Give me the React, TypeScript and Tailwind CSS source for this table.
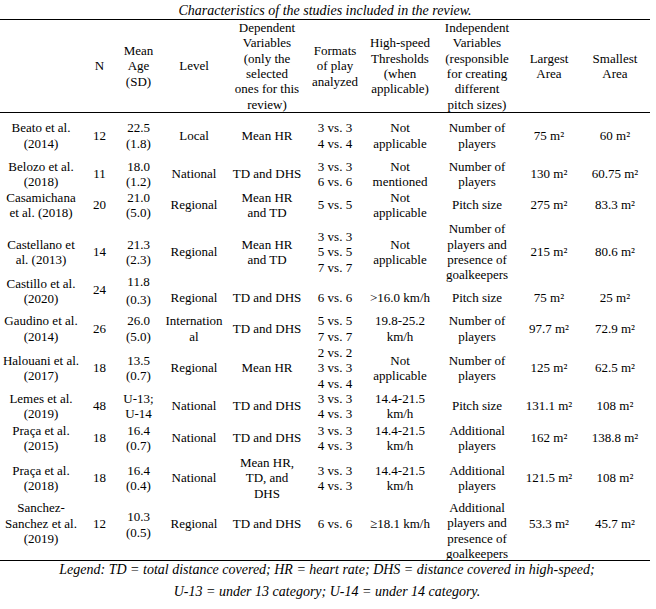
import React from "react";

type Cell = { lines: React.ReactNode[]; cls?: string };
type Row = { h: number; cells: Cell[] };

const M2 = (v: string) => `${v} m²`;

const L = (...lines: React.ReactNode[]): Cell => ({ lines });
const LC = (cls: string, ...lines: React.ReactNode[]): Cell => ({ lines, cls });

const header: Cell[] = [
  L(""),
  L("N"),
  L("Mean", "Age", "(SD)"),
  L("Level"),
  L("Dependent", "Variables", "(only the", "selected", "ones for this", "review)"),
  L("Formats", "of play", "analyzed"),
  L("High-speed", "Thresholds", "(when", "applicable)"),
  L("Independent", "Variables", "(responsible", "for creating", "different", "pitch sizes)"),
  L("Largest", "Area"),
  L("Smallest", "Area"),
];

const up = "-translate-y-[7px]";

const rows: Row[] = [
  {
    h: 45,
    cells: [
      L("Beato et al.", "(2014)"),
      L("12"),
      L("22.5", "(1.8)"),
      L("Local"),
      L("Mean HR"),
      L("3 vs. 3", "4 vs. 4"),
      L("Not", "applicable"),
      L("Number of", "players"),
      L(M2("75")),
      L(M2("60")),
    ],
  },
  {
    h: 32,
    cells: [
      L("Belozo et al.", "(2018)"),
      L("11"),
      L("18.0", "(1.2)"),
      L("National"),
      L("TD and DHS"),
      L("3 vs. 3", "6 vs. 6"),
      L("Not", "mentioned"),
      L("Number of", "players"),
      L(M2("130")),
      L(M2("60.75")),
    ],
  },
  {
    h: 30,
    cells: [
      L("Casamichana", "et al. (2018)"),
      L("20"),
      L("21.0", "(5.0)"),
      L("Regional"),
      L("Mean HR", "and TD"),
      L("5 vs. 5"),
      L("Not", "applicable"),
      L("Pitch size"),
      L(M2("275")),
      L(M2("83.3")),
    ],
  },
  {
    h: 64,
    cells: [
      L("Castellano et", "al. (2013)"),
      L("14"),
      L("21.3", "(2.3)"),
      L("Regional"),
      L("Mean HR", "and TD"),
      L("3 vs. 3", "5 vs. 5", "7 vs. 7"),
      L("Not", "applicable"),
      L("Number of", "players and", "presence of", "goalkeepers"),
      L(M2("215")),
      L(M2("80.6")),
    ],
  },
  {
    h: 28,
    cells: [
      LC(up, "Castillo et al.", "(2020)"),
      LC("-translate-y-[8px]", "24"),
      LC(up + " leading-[18px]", "11.8", "(0.3)"),
      L("Regional"),
      L("TD and DHS"),
      L("6 vs. 6"),
      L(">16.0 km/h"),
      L("Pitch size"),
      L(M2("75")),
      L(M2("25")),
    ],
  },
  {
    h: 33,
    cells: [
      L("Gaudino et al.", "(2014)"),
      L("26"),
      L("26.0", "(5.0)"),
      L("Internation", "al"),
      L("TD and DHS"),
      L("5 vs. 5", "7 vs. 7"),
      L("19.8-25.2", "km/h"),
      L("Number of", "players"),
      L(M2("97.7")),
      L(M2("72.9")),
    ],
  },
  {
    h: 46,
    cells: [
      L("Halouani et al.", "(2017)"),
      L("18"),
      L("13.5", "(0.7)"),
      L("Regional"),
      L("Mean HR"),
      L("2 vs. 2", "3 vs. 3", "4 vs. 4"),
      L("Not", "applicable"),
      L("Number of", "players"),
      L(M2("125")),
      L(M2("62.5")),
    ],
  },
  {
    h: 30,
    cells: [
      L("Lemes et al.", "(2019)"),
      L("48"),
      L("U-13;", "U-14"),
      L("National"),
      L("TD and DHS"),
      L("3 vs. 3", "4 vs. 3"),
      L("14.4-21.5", "km/h"),
      L("Pitch size"),
      L(M2("131.1")),
      L(M2("108")),
    ],
  },
  {
    h: 34,
    cells: [
      L("Praça et al.", "(2015)"),
      L("18"),
      L("16.4", "(0.7)"),
      L("National"),
      L("TD and DHS"),
      L("3 vs. 3", "4 vs. 3"),
      L("14.4-21.5", "km/h"),
      L("Additional", "players"),
      L(M2("162")),
      L(M2("138.8")),
    ],
  },
  {
    h: 46,
    cells: [
      L("Praça et al.", "(2018)"),
      L("18"),
      L("16.4", "(0.4)"),
      L("National"),
      L("Mean HR,", "TD, and", "DHS"),
      L("3 vs. 3", "4 vs. 3"),
      L("14.4-21.5", "km/h"),
      L("Additional", "players"),
      L(M2("121.5")),
      L(M2("108")),
    ],
  },
  {
    h: 59,
    cells: [
      LC(up, "Sanchez-", "Sanchez et al.", "(2019)"),
      LC(up, "12"),
      LC("-translate-y-[6px]", "10.3", "(0.5)"),
      LC(up, "Regional"),
      LC(up, "TD and DHS"),
      LC(up, "6 vs. 6"),
      LC(up, "≥18.1 km/h"),
      L("Additional", "players and", "presence of", "goalkeepers"),
      LC(up, M2("53.3")),
      LC(up, M2("45.7")),
    ],
  },
];

const gridCols =
  "grid grid-rows-1 grid-cols-[82px_35px_43px_68px_78px_58px_72px_82px_62px_70px]";

function CellView({ cell }: { cell: Cell }) {
  return (
    <div
      className={
        "flex flex-col items-center justify-center text-center whitespace-nowrap min-h-0 " +
        (cell.cls ?? "")
      }
    >
      {cell.lines.map((ln, i) => (
        <div key={i}>{ln}</div>
      ))}
    </div>
  );
}

export default function App() {
  return (
    <div
      className="w-[656px] h-[609px] bg-white text-black overflow-hidden"
      style={{ fontFamily: '"Liberation Serif", "Times New Roman", serif' }}
    >
      <div className="w-[650px]">
        <div className="h-[19px] flex items-center justify-center italic text-[14px] leading-[19px] pt-[2px]">
          Characteristics of the studies included in the review.
        </div>
        <div className="border-t border-b border-black text-[13px] leading-[15.4px]">
          <div className={gridCols + " h-[92px]"}>
            {header.map((c, i) => (
              <CellView key={i} cell={c} />
            ))}
          </div>
        </div>
        <div className="border-b border-black text-[13px] leading-[15.4px]">
          {rows.map((r, ri) => (
            <div key={ri} className={gridCols} style={{ height: r.h }}>
              {r.cells.map((c, ci) => (
                <CellView key={ci} cell={c} />
              ))}
            </div>
          ))}
        </div>
        <div className="pl-[4px] text-center italic text-[14px] leading-[22px] -mt-[2px]">
          <div>
            Legend: TD = total distance covered; HR = heart rate; DHS = distance
            covered in high-speed;
          </div>
          <div>U-13 = under 13 category; U-14 = under 14 category.</div>
        </div>
      </div>
    </div>
  );
}
